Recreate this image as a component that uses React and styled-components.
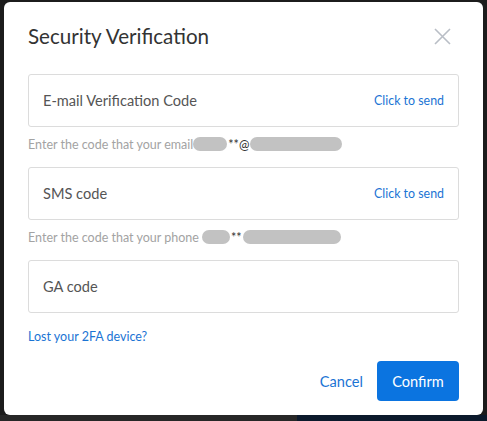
import React from 'react'
import styled, { createGlobalStyle } from 'styled-components'

const GlobalStyle = createGlobalStyle`
  html, body {
    margin: 0;
    padding: 0;
    background: #1c1c1c;
    font-family: Lato, "Noto Sans", sans-serif;
  }
`

const Backdrop = styled.div`
  width: 487px;
  height: 421px;
  display: flex;
  flex-direction: column;
  padding: 2px 4px 0;
  box-sizing: border-box;
  overflow: hidden;
`

const Modal = styled.div`
  background: #fff;
  border-radius: 6px;
  height: 413px;
  padding: 0 24px;
  box-sizing: border-box;
  display: flex;
  flex-direction: column;
`

const Strip = styled.div`
  display: flex;
  flex: 1;
  margin: 0 -4px;
  div:first-child { width: 297px; background: #272727; }
  div:last-child { flex: 1; background: #0c1a2c; }
`

const Header = styled.div`
  display: flex;
  align-items: center;
  justify-content: space-between;
  height: 72px;
  padding-bottom: 4px;
  box-sizing: border-box;
  h2 {
    margin: 0;
    font-size: 20.6px;
    font-weight: 400;
    color: #333;
  }
`

const Close = styled.button`
  border: none;
  background: none;
  padding: 0;
  margin-right: 8px;
  width: 17px;
  height: 17px;
  cursor: pointer;
  display: flex;
`

const Field = styled.div`
  height: 53px;
  border: 1px solid #dcdcdc;
  border-radius: 3px;
  box-sizing: border-box;
  display: flex;
  align-items: center;
  padding: 0 14px 0 14px;
  input {
    flex: 1;
    border: none;
    outline: none;
    font: inherit;
    font-size: 14.6px;
    color: #333;
    background: transparent;
    padding: 0;
    &::placeholder { color: #555; }
  }
`

const Send = styled.span`
  color: #1b74d4;
  font-size: 12.4px;
  cursor: pointer;
`

const Hint = styled.div`
  display: flex;
  align-items: center;
  height: 16px;
  margin: 9px 0 15px;
  font-size: 12.5px;
  color: #a3a3a3;
  b {
    font-weight: 400;
    color: #333;
    font-size: 12.5px;
    margin: 0 1px;
  }
`

const Mask = styled.span`
  display: inline-block;
  width: ${p => p.$w}px;
  height: 14px;
  border-radius: 7px;
  background: #c2c2c2;
  margin-left: ${p => p.$ml || 0}px;
`

const Lost = styled.a`
  color: #1b74d4;
  font-size: 12.5px;
  margin-top: 16px;
  cursor: pointer;
`

const Actions = styled.div`
  display: flex;
  justify-content: flex-end;
  align-items: center;
  gap: 14px;
  margin-top: 17px;
`

const TextButton = styled.button`
  border: none;
  background: none;
  color: #1b74d4;
  font: inherit;
  font-size: 14.6px;
  padding: 0;
  cursor: pointer;
`

const PrimaryButton = styled.button`
  border: none;
  background: #0b74e0;
  color: #fff;
  font: inherit;
  font-size: 14.6px;
  width: 82px;
  height: 40px;
  border-radius: 4px;
  cursor: pointer;
`

export default function App() {
  return (
    <>
      <GlobalStyle />
      <Backdrop>
        <Modal>
          <Header>
            <h2>Security Verification</h2>
            <Close aria-label="close">
              <svg width="17" height="17" viewBox="0 0 17 17">
                <path d="M1 1L16 16M16 1L1 16" stroke="#b9bec6" strokeWidth="1.6" />
              </svg>
            </Close>
          </Header>
          <Field>
            <input placeholder="E-mail Verification Code" />
            <Send>Click to send</Send>
          </Field>
          <Hint>
            Enter the code that your email<Mask $w={34} />
            <b>**@</b>
            <Mask $w={92} />
          </Hint>
          <Field>
            <input placeholder="SMS code" />
            <Send>Click to send</Send>
          </Field>
          <Hint>
            Enter the code that your phone<Mask $w={28} $ml={3} />
            <b>**</b>
            <Mask $w={98} />
          </Hint>
          <Field>
            <input placeholder="GA code" />
          </Field>
          <Lost>Lost your 2FA device?</Lost>
          <Actions>
            <TextButton>Cancel</TextButton>
            <PrimaryButton>Confirm</PrimaryButton>
          </Actions>
        </Modal>
        <Strip><div /><div /></Strip>
      </Backdrop>
    </>
  )
}
